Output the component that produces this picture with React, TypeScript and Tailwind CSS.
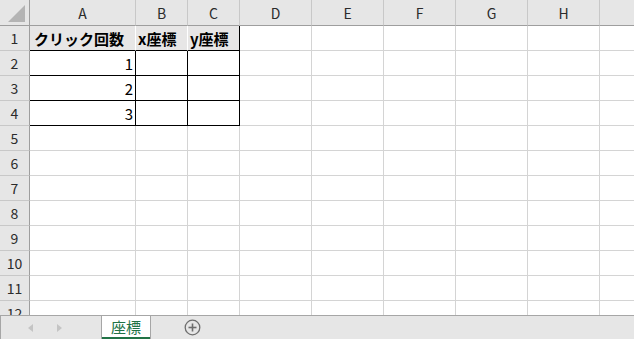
import React from "react";

const cols = [
  { k: "A", w: "w-[106px]" },
  { k: "B", w: "w-[52px]" },
  { k: "C", w: "w-[52px]" },
  { k: "D", w: "w-[72px]" },
  { k: "E", w: "w-[72px]" },
  { k: "F", w: "w-[72px]" },
  { k: "G", w: "w-[72px]" },
  { k: "H", w: "w-[72px]" },
  { k: "", w: "w-[72px]" },
];

const font = { fontFamily: '"Noto Sans CJK JP", "Noto Sans", sans-serif' };

function cellClass(r: number, c: number): string {
  const base = "h-[25px] shrink-0 border-r border-b flex items-center leading-none";
  if (r === 1 && c <= 2) {
    const right = c === 2 ? "border-r-black" : "border-r-white";
    return `${base} bg-[#e7e6e6] ${right} border-b-black`;
  }
  if (r >= 2 && r <= 4 && c <= 2) {
    return `${base} bg-white border-r-black border-b-black`;
  }
  return `${base} bg-white border-r-[#d4d4d4] border-b-[#d4d4d4]`;
}

const content: Record<string, React.ReactNode> = {
  "1-0": <span className="pl-[4px] font-bold text-[15px] text-black">クリック回数</span>,
  "1-1": <span className="pl-[2px] font-bold text-[15px] text-black">x座標</span>,
  "1-2": <span className="pl-[2px] font-bold text-[15px] text-black">y座標</span>,
  "2-0": <span className="ml-auto pr-[2px] text-[15px] text-black">1</span>,
  "3-0": <span className="ml-auto pr-[2px] text-[15px] text-black">2</span>,
  "4-0": <span className="ml-auto pr-[2px] text-[15px] text-black">3</span>,
};

export default function App() {
  const rows = Array.from({ length: 12 }, (_, i) => i + 1);
  return (
    <div className="w-[634px] h-[339px] overflow-hidden bg-white flex flex-col" style={font}>
      <div className="h-[315px] overflow-hidden flex flex-col shrink-0">
        <div className="flex h-[26px] shrink-0">
          <div className="w-[30px] h-[26px] shrink-0 bg-[#e6e6e6] border-r border-b border-[#9e9e9e] relative">
            <svg className="absolute left-[8px] top-[5px]" width="18" height="18" viewBox="0 0 18 18">
              <polygon points="17,0 17,17 0,17" fill="#b4b4b4" />
            </svg>
          </div>
          {cols.map((c, i) => (
            <div
              key={i}
              className={`${c.w} h-[26px] shrink-0 bg-[#e6e6e6] border-r border-r-[#c8c8c8] border-b border-b-[#9e9e9e] flex items-center justify-center text-[14px] leading-none text-[#2b2b2b]`}
            >
              {c.k}
            </div>
          ))}
        </div>
        {rows.map((r) => (
          <div key={r} className="flex h-[25px] shrink-0">
            <div className="w-[30px] h-[25px] shrink-0 bg-[#e6e6e6] border-r border-r-[#9e9e9e] border-b border-b-[#c8c8c8] flex items-center justify-center text-[14px] leading-none text-[#2b2b2b]">
              {r}
            </div>
            {cols.map((c, ci) => (
              <div key={ci} className={`${c.w} ${cellClass(r, ci)}`}>
                {content[`${r}-${ci}`]}
              </div>
            ))}
          </div>
        ))}
      </div>
      <div className="flex h-[24px] shrink-0 bg-[#e6e6e6] border-t border-[#a6a6a6]">
        <div className="w-[102px] h-full shrink-0 border-l border-r border-[#a6a6a6] flex items-center pl-[27px] gap-[24px]">
          <svg width="5" height="8" viewBox="0 0 5 8">
            <polygon points="5,0 5,8 0,4" fill="#c4c4c4" />
          </svg>
          <svg width="5" height="8" viewBox="0 0 5 8">
            <polygon points="0,0 0,8 5,4" fill="#c4c4c4" />
          </svg>
        </div>
        <div className="w-[49px] h-full shrink-0 bg-white border-r border-[#a6a6a6] flex flex-col">
          <div className="flex-1 flex items-center justify-center text-[15px] leading-none text-[#217346]">
            座標
          </div>
          <div className="h-[2px] bg-[#217346]" />
        </div>
        <div className="flex items-center pl-[33px]">
          <svg width="17" height="17" viewBox="0 0 17 17">
            <circle cx="8.5" cy="8.5" r="7.3" fill="none" stroke="#6e6e6e" strokeWidth="1.3" />
            <line x1="8.5" y1="4.5" x2="8.5" y2="12.5" stroke="#6e6e6e" strokeWidth="1.6" />
            <line x1="4.5" y1="8.5" x2="12.5" y2="8.5" stroke="#6e6e6e" strokeWidth="1.6" />
          </svg>
        </div>
      </div>
    </div>
  );
}
